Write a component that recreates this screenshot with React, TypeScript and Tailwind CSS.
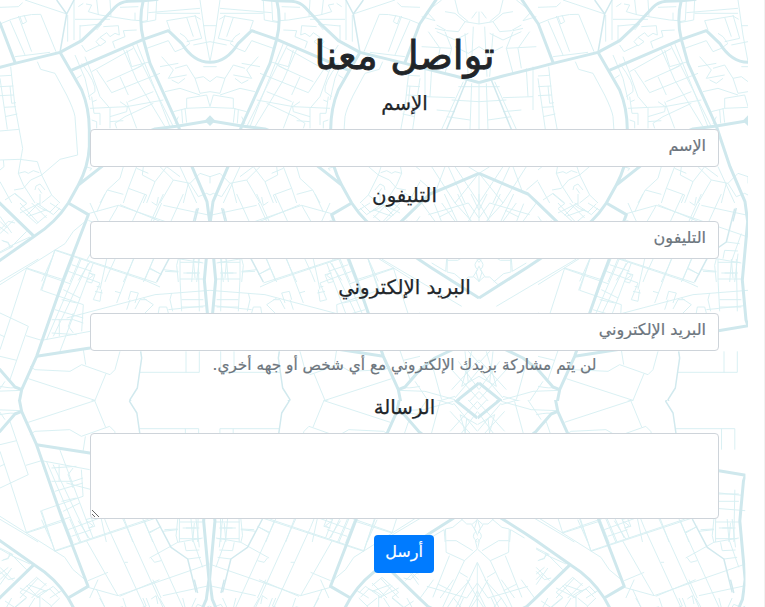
import React from "react";

function Quarter() {
  return (
    <g id="quarter" clipPath="url(#quarter-clip)" fill="none" strokeLinejoin="round">
      <g stroke="#d8eff3" strokeWidth="2.9">
        <path d="M75 0L200 42M0 22L55 20L68 8M0 72Q70 40 122 43L168 155M30 62L75 165M55 48L95 155M60 50L68 72L80 65L72 45M45 170L150 157M112 185L122 208L165 220L200 285Q222 330 225 350L233 465L180 478L125 525L92 540L70 565L42 570M203 45V125M222 0V120M32 200L45 320L68 445L55 520L70 555L105 609M0 228L35 226M0 260L40 258M0 287L42 285M0 235L22 388M30 258L35 310L48 308M12 322L48 320M15 350L52 342M0 393L58 388M0 480L60 478L112 485L125 525L155 585L125 609M55 520L75 515L85 520L100 512L118 518M155 585L180 609M105 570L108 558L120 552L135 570M115 565L125 580M0 510L12 500L10 480M0 545L35 609M15 600L45 580L80 609" />
        <path d="M225 58H330M240 78L305 72L290 90M240 75V125M288 125L300 112L318 125L300 138ZM300 112L320 98L330 110L345 100L358 105L355 77L310 80M245 135L258 155L300 135M258 12L275 15L265 35L300 45L395 60L420 62M235 20L250 10M290 0L295 45M338 125L375 110L370 92L410 90M338 125L345 145M330 0L333 50M360 22L415 20M405 38V60M445 2L442 62L425 65M470 0L467 60L425 68M445 38L600 25M470 40H600M600 0L615 105L630 185M610 77H630M585 45L605 115L560 125M560 52L580 110M500 62L585 48L602 58M580 135L630 125M540 100L555 110L568 128M500 62L510 90" />
        <path d="M275 215L400 145M225 165L255 235L270 300M255 170L275 220L300 290L330 325M290 210L335 278L480 220M320 245L425 198M360 230L385 285M370 148L410 240L495 380M395 130L520 380M410 130L510 380M380 150L395 200L450 185M230 235L245 225M245 190Q290 250 285 275L265 290M400 210L435 190M385 305L460 275M270 325L380 320L490 300M275 290L282 340H300V375M290 300L278 305M330 325V385M380 305L410 385M360 305L382 320L380 335L330 350M460 310L375 350L345 370L350 385M330 365L370 362M275 360L290 365V385M440 145L505 122L525 155M525 155L550 145L570 130M485 170L520 210L505 235L560 225M480 200L535 190M515 240L535 250L555 235M525 205L560 195L585 235L600 280L630 275M495 275L540 265L600 285M585 235L610 230L630 245M610 200H630M560 295L620 285L630 320M560 295V325L630 322M520 335L560 325M545 330L548 370M555 325L560 368M535 350L525 372" />
        <path d="M370 500L360 535L322 570L300 609M322 570L370 583M410 500L385 565L370 609M385 565L440 585L430 609M430 500L427 525L465 545M410 505L445 520M500 500L465 545L440 609M480 500L520 540L570 550M520 540L480 609M500 500L540 530M570 550L600 520L630 530M570 550L595 590L620 580L630 585M630 530V550M255 500L275 505L270 512M540 500L590 609M565 550L550 609" />
        <g transform="translate(0 609)">
          <path d="M60 0L115 60M95 0L140 45M60 30L120 0M85 40L140 20M110 0L160 35L180 15M0 80L25 55L45 60M0 55L20 75M0 40L35 90M10 115L25 118L30 135L80 85M0 150L40 130M150 0L190 25M0 245L195 122L220 85L262 50M165 140L125 262L250 305M165 140L470 240M80 195L190 230M80 195L30 350L0 440M0 330L85 370L30 530M78 398L125 412L270 385M0 395L15 402M0 460L50 472M250 440L257 485M90 490L105 500L210 505L245 485L330 515L345 500L360 445M85 527L285 592L225 609M285 592L318 512M285 592L292 609M0 550Q40 558 50 552M420 508H598V445M558 445V508M200 345L465 275L630 262M400 168L350 300M345 265L362 270M320 168L300 260M460 168L435 230M450 195L485 215M270 0L295 55M360 5L480 55M380 320L390 290M485 0L460 55M540 168V228L545 325M580 168L585 225M595 168L598 325M490 200L535 205M540 228H610M560 210H590M540 178H605M515 270L510 290L518 325M545 290H610M545 312H610M475 330L478 312L500 312L505 330M385 290L392 265L415 270L405 300M430 285L460 305L435 330M405 318L420 290L440 290M505 320L620 308" />
          <path d="M245 165L140 410M265 180L160 400M220 165L130 395M205 205L300 240M190 260L240 285M215 185L275 205M265 210L285 215L275 240L258 235M290 250L300 252M285 265L308 270M300 240L280 290L300 295L305 260M165 320L250 345M155 350L220 350L250 360M220 330L205 370L220 390M155 390L230 395M250 305L245 385M280 180L180 445M178 350V400M185 290L230 300" />
        </g>
        <g transform="translate(0 1191) scale(1 -1)">
          <path d="M165 440L440 348L480 330M122 320L165 440M80 385L210 340M265 530L325 505M265 550L355 575L630 480M260 410L355 575M315 345L325 370L435 609M370 345L490 609M430 345L550 609M290 555L315 609M450 462L535 415L610 402M535 345L530 395L535 415M448 385L480 370M495 377L535 375M550 372H600M575 345L580 405L610 490M590 345L600 430M555 415L560 440L600 438M565 465L605 460M455 462L465 475L485 470M455 585L470 575L475 600M375 475H385M490 575L630 545M0 435L35 455L90 480M5 470L20 465L35 450M0 490L40 530M0 510L25 490M45 609L80 580L60 565L110 520L140 545M80 545L110 575L125 565L150 555L175 580M120 609V575M210 345L240 415M235 350L270 405M260 350L280 365L270 372" />
        </g>
        <g transform="translate(495 0) scale(-1 1)">
          <path d="M500 50L540 62L515 35L560 0M545 75L575 92L610 95L630 65L600 40L570 35M540 85L570 92M630 65L672 72V35M600 0L610 40L640 65M665 35L650 55M520 95L555 145L545 205M545 95L600 120L640 100M570 95L590 145L570 220M600 140L640 160L672 140M630 100L640 230M655 80L648 230M500 140L590 145M510 200V330M530 205L525 290M510 290L600 293M545 330L600 335M625 245L560 388M650 250L645 388M672 250V388M610 260H672M590 300L672 305M575 350L645 360M530 500L600 609M580 500L630 609M600 500L672 609M540 580L570 500M672 520L600 609M672 520V609M640 500L672 520M495 540L530 570" />
          <path transform="translate(0 609)" d="M500 0L540 55M560 0L600 55M600 0L650 55M640 0L672 45M672 0L640 55M520 35L640 0M672 168Q650 185 668 200L655 220L672 235M575 168L572 205L530 180M655 222L640 222L615 245L560 215M340 168L370 235M380 168L620 310M500 360L672 420M590 560L672 470M600 585L672 500M640 445L672 480M610 475L672 560M590 500L672 590M630 609L672 565M630 445L640 540M600 590L510 565L430 562M500 609L600 580M650 445L620 550L672 520M480 535L530 609M530 480L560 590" />
          <path transform="translate(8 1191) scale(1 -1)" d="M568 375L570 445L625 470L664 435M570 410H600L650 440M664 475L600 609M664 475V609M580 455L530 580M625 470L560 609M664 345L655 375L668 400L658 410L664 435M664 560L640 609M620 345L590 370L568 375M610 505L635 520M545 540L585 560" />
        </g>
      </g>
      <g stroke="#d1e9ee" strokeWidth="4.5">
        <path d="M170 0L200 42L180 157M200 42L222 0M422 1054L425 1074L412 1164L390 1199L400 1218M-140 240L-80 388M595 624L585 664" />
        <path transform="translate(0 1191) scale(1 -1)" d="M470 345L515 430L565 465L590 565" />
      </g>
      <g stroke="#cfe8ed" strokeWidth="9">
        <path d="M-177 248L-105 228L0 202L45 190L180 157L245 122L300 70L345 22Q360 6 385 4L430 2L475 -2" />
        <path d="M180 157L212 212L245 270Q268 325 268 390V440Q265 500 235 555L205 609Q165 670 105 707L0 781L-35 804L-177 894M235 555L305 500L370 425L465 387L535 378L630 362M205 609L265 644L190 839L110 1069L65 1169L58 1205" />
        <path d="M-49 -2L1 72L46 190M212 212L430 118L505 92L545 130Q580 187 630 187M430 0Q415 60 430 118L450 190L535 378L576 500L621 605L629 665L613 840L624 960L631 980M110 1069L270 1044L541 992L631 977" />
        <path d="M-177 520L-84 560L-30 582L0 610L100 707M65 1169L45 1161L0 1109L-45 1074L-105 1045M-177 1149L-112 1201L-177 1254" />
      </g>
      <path d="M614 362L630 346V378Z" fill="#cfe8ed" />
    </g>
  );
}

function MapBackground() {
  return (
    <svg className="absolute inset-0 h-[607px] w-[765px]" viewBox="0 0 765 607" aria-hidden="true">
      <defs>
        <clipPath id="quarter-clip"><rect x="-177" y="0" width="807" height="1203" /></clipPath>
        <Quarter />
        <g id="half">
          <use href="#quarter" />
          <use href="#quarter" transform="translate(1260 0) scale(-1 1)" />
          <use href="#quarter" transform="translate(1614 0)" />
        </g>
      </defs>
      <use href="#half" transform="scale(.33333)" />
      <use href="#half" transform="translate(0 801) scale(.3322 -.33333)" />
    </svg>
  );
}

const control =
  "block w-full rounded-[4px] border border-[#ced4da] bg-white px-3 text-[16px] text-[#495057] placeholder:text-[#6c757d] outline-none";

const labelStyle =
  "mb-2 block pb-1 text-[19.8px] leading-[26px] [-webkit-text-stroke:0.25px_#212529]";

function Field({ label, note }: { label: string; note?: string }) {
  return (
    <div className="mb-4">
      <label className={labelStyle}>{label}</label>
      <input className={control + " h-[38px] pb-1.5 [-webkit-text-stroke:0.2px_#6c757d]"} placeholder={label} />
      {note && (
        <small className="mt-1 block pb-1 text-[15.3px] leading-5 text-[#6c757d] [-webkit-text-stroke:0.2px_#6c757d]">
          {note}
        </small>
      )}
    </div>
  );
}

export default function App() {
  return (
    <main dir="rtl" className="relative h-[607px] w-[765px] overflow-hidden bg-white font-['DejaVu_Sans',sans-serif] text-[#212529]">
      <MapBackground />
      <form className="relative mr-[46px] w-[629px] pt-[35px] text-center">
        <h1 className="mb-2 pb-[6px] text-[39px] leading-[42px] [-webkit-text-stroke:0.8px_#212529]">تواصل معنا</h1>
        <Field label="الإسم" />
        <Field label="التليفون" />
        <Field label="البريد الإلكتروني" note="لن يتم مشاركة بريدك الإلكتروني مع أي شخص أو جهه أخري." />
        <label className={labelStyle}>الرسالة</label>
        <textarea className={control + " mb-4 h-[86px] resize-y py-1.5"} />
        <button type="button" className="mr-[285px] block h-[38px] w-[60px] rounded-[4px] bg-[#007bff] pb-1 text-[16px] text-white [-webkit-text-stroke:0.2px_#fff]">أرسل</button>
      </form>
      <div className="absolute right-0 top-0 h-full w-px bg-[#f1f1f1]" />
    </main>
  );
}
